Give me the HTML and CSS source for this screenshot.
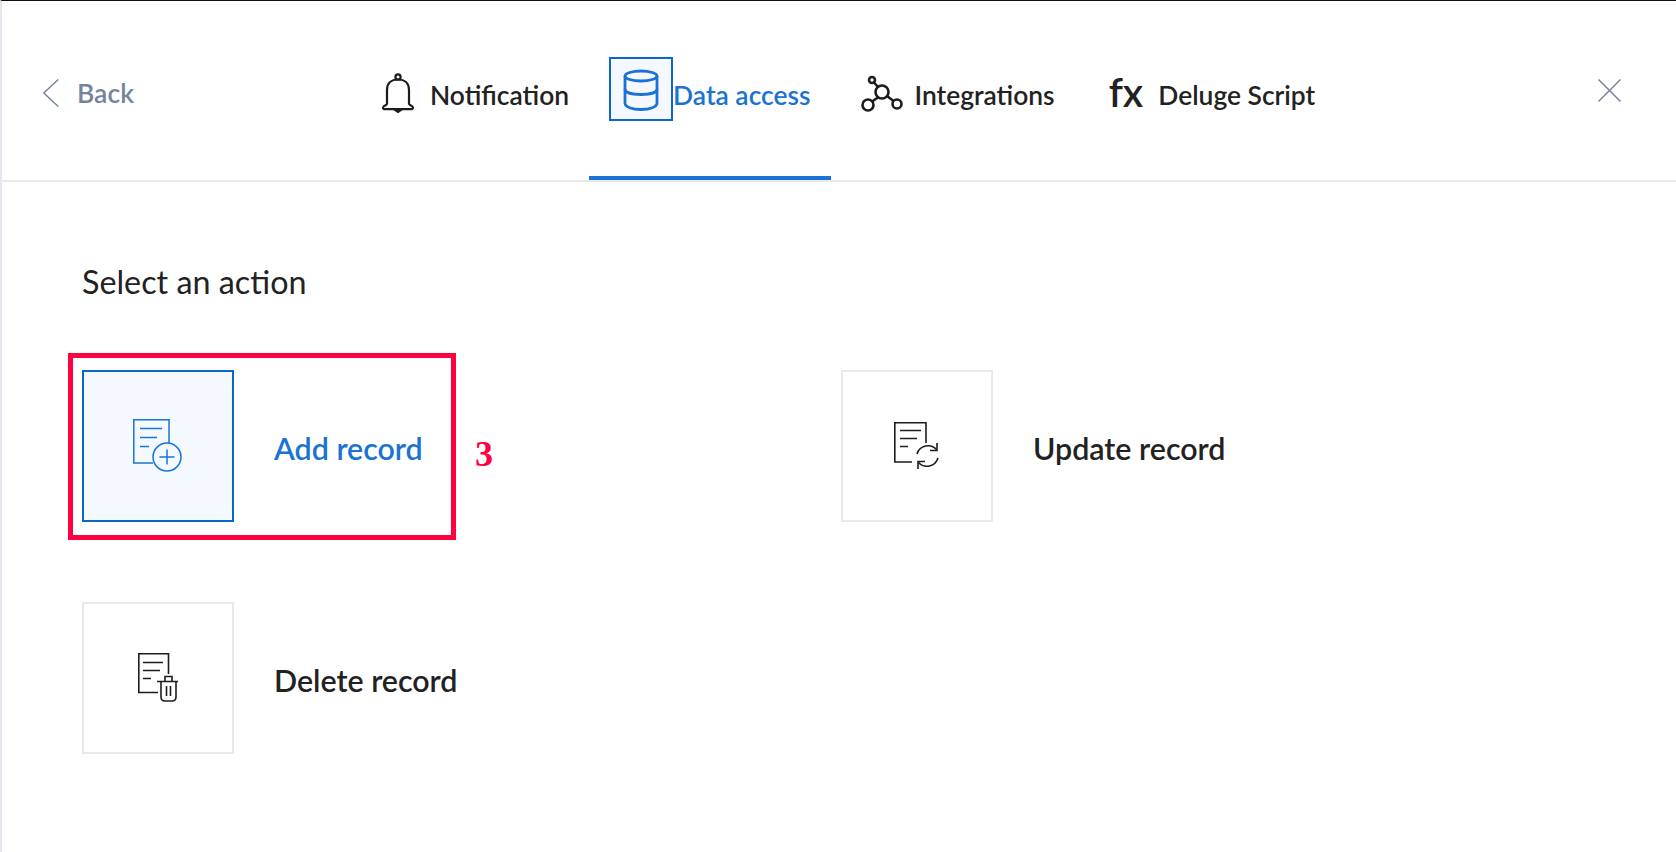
FILE: index.html
```html
<!DOCTYPE html>
<html lang="en">
<head>
<meta charset="utf-8">
<title>Select an action</title>
<link rel="stylesheet" href="styles.css">
</head>
<body>
<div class="page">
  <header class="header">
    <a class="back">
      <svg class="back-icon" width="20" height="32" viewBox="0 0 20 32"><path d="M18 1 L2 16 L18 31" fill="none" stroke="#76839c" stroke-width="1.6"/></svg>
      <span>Back</span>
    </a>
    <nav class="tabs">
      <div class="tab tab-notification">
        <svg class="bell" width="34" height="40" viewBox="0 0 34 40" fill="none" stroke="#1c1c1c" stroke-width="2.2">
          <circle cx="17" cy="4" r="2.6"/>
          <path d="M6 31 V17 C6 10 10.500 6.500 17 6.500 C23.500 6.500 28 10 28 17 V31 C28 32 31.800 32.500 32 34.500 C32.100 35.800 31 36.200 30 36.200 H4 C3 36.200 1.900 35.800 2 34.500 C2.200 32.500 6 32 6 31 Z"/>
          <path d="M15 37.500 H19 L17 39 Z" fill="#1c1c1c"/>
        </svg>
        <span>Notification</span>
      </div>
      <div class="tab tab-active">
        <div class="db-box">
          <svg width="38" height="44" viewBox="0 0 38 44" fill="none" stroke="#1a73d4" stroke-width="2.8">
            <ellipse cx="19" cy="9" rx="16" ry="5"/>
            <path d="M3 9 V36 C3 40 10 42.500 19 42.500 C28 42.500 35 40 35 36 V9"/>
            <path d="M3 22 C3 25.500 10 27.500 19 27.500 C28 27.500 35 25.500 35 22"/>
          </svg>
        </div>
        <span>Data access</span>
      </div>
      <div class="tab tab-integrations">
        <svg width="64" height="40" viewBox="0 0 64 40" fill="none" stroke="#1c1c1c" stroke-width="2.600">
          <circle cx="31" cy="19" r="6.500"/>
          <circle cx="21" cy="7" r="3"/>
          <circle cx="17" cy="32" r="5.500"/>
          <circle cx="46" cy="31" r="4.500"/>
          <path d="M23 9.500 L27 14 M27 24.500 L21 28.500 M36 23 L42.500 28"/>
        </svg>
        <span>Integrations</span>
      </div>
      <div class="tab tab-script">
        <span class="fx">fx</span>
        <span>Deluge Script</span>
      </div>
    </nav>
    <svg class="close" width="25" height="25" viewBox="0 0 25 25"><path d="M1.500 1.500 L23.500 23.500 M23.500 1.500 L1.500 23.500" stroke="#76839c" stroke-width="1.500" fill="none"/></svg>
  </header>

  <main class="content">
    <h2 class="title">Select an action</h2>
    <div class="actions">
      <div class="action action-selected">
        <div class="tile">
          <svg width="60" height="60" viewBox="0 0 60 60" fill="none" stroke="#1a73d4" stroke-width="1.500">
            <path d="M41 27 V3.800 H5.800 V47 H25"/>
            <path d="M12 12.500 H34 M12 21.500 H29 M12 30.500 H21"/>
            <circle cx="39" cy="41" r="14"/>
            <path d="M39 33.500 V48.500 M31.500 41 H46.500"/>
          </svg>
        </div>
        <span class="label">Add record</span>
        <div class="callout"></div>
        <span class="callout-number">3</span>
      </div>
      <div class="action">
        <div class="tile">
          <svg width="60" height="60" viewBox="0 0 60 60" fill="none" stroke="#1c1c1c" stroke-width="1.600">
            <path d="M39 27 V6.800 H7.800 V46 H25"/>
            <path d="M13 14.500 H34 M13 22.500 H30 M13 30.500 H21"/>
            <path d="M30 38 A11.500 11.500 0 0 1 49.500 33.500"/>
            <path d="M50 27 V34.500 H43" />
            <path d="M51 42 A11.500 11.500 0 0 1 31.500 46.500"/>
            <path d="M31 53 V45.500 H38"/>
          </svg>
        </div>
        <span class="label">Update record</span>
      </div>
      <div class="action">
        <div class="tile">
          <svg width="60" height="60" viewBox="0 0 60 60" fill="none" stroke="#1c1c1c" stroke-width="1.600">
            <path d="M40.500 26 V5.800 H10.800 V44.500 H30"/>
            <path d="M15 14.500 H35 M15 22.500 H32 M15 30.500 H23"/>
            <path d="M29 33.500 H50 M37 33 V28.500 H44 V33"/>
            <path d="M33 33.500 V49 C33 52 34.500 53 37 53 H44 C46.500 53 48 52 48 49 V33.500"/>
            <path d="M38.500 38 V48 M42.500 38 V48"/>
          </svg>
        </div>
        <span class="label">Delete record</span>
      </div>
    </div>
  </main>
</div>
</body>
</html>
```

FILE: styles.css
```css
* { box-sizing: border-box; }
html, body { margin: 0; padding: 0; background: #fff; }
body {
  font-family: Lato, "Open Sans", sans-serif;
  color: #222;
  overflow: hidden;
}
.page {
  height: 852px;
  border-top: 1px solid #111;
  border-left: 2px solid #e2e8ee;
}
.header {
  height: 181px;
  display: flex;
  align-items: flex-start;
  padding-left: 40px;
  padding-right: 54px;
  border-bottom: 2px solid #e9e9e9;
}
.back {
  display: flex;
  align-items: center;
  gap: 17px;
  width: 92px;
  height: 32px;
  margin-top: 76px;
  font-size: 26.500px;
  font-weight: 600;
  color: #76839c;
}
.tabs {
  display: flex;
  margin-left: 227px;
  height: 179px;
}
.tab {
  display: flex;
  align-items: center;
  height: 179px;
  padding: 0 20px;
  font-size: 26.400px;
  font-weight: 600;
  color: #222;
  border-bottom: 4px solid transparent;
  padding-top: 12px;
}
.bell { margin-top: -3px; }
.tab-notification { gap: 15px; }
.tab-active {
  color: #1a73d4;
  border-bottom-color: #1a73d4;
  padding-top: 0;
}
.db-box {
  width: 64px;
  height: 64px;
  border: 2px solid #0b66c9;
  background: #f5f9ff;
  display: flex;
  align-items: center;
  justify-content: center;
}
.tab-active span { margin-top: 12px; }
.tab-integrations { padding-right: 34px; }
.tab-integrations svg { margin-top: -4px; }
.tab-script { gap: 15px; }
.fx {
  font-size: 40px;
  font-weight: 600;
  line-height: 1;
  margin-top: -6px;
}
.close { margin-top: 77px; margin-left: auto; }
.content { padding: 0 0 0 80px; }
.title {
  margin: 0;
  padding-top: 80px;
  height: 188px;
  font-size: 32.300px;
  line-height: 40px;
  font-weight: 400;
  color: #222;
}
.actions {
  display: grid;
  grid-template-columns: 759px 1fr;
  grid-auto-rows: 152px;
  row-gap: 80px;
}
.action {
  position: relative;
  display: flex;
  align-items: center;
  gap: 40px;
}
.tile {
  width: 152px;
  height: 152px;
  flex: none;
  border: 2px solid #e9e9e9;
  display: flex;
  align-items: center;
  justify-content: center;
}
.label {
  font-size: 30.400px;
  font-weight: 600;
  color: #222;
  margin-top: 4px;
}
.action-selected .tile { border-color: #0b66c9; background: #f4f8ff; }
.action-selected .label { color: #1a73d4; }
.callout {
  position: absolute;
  left: -14px;
  top: -17px;
  width: 388px;
  height: 187px;
  border: 5px solid #ff0040;
}
.callout-number {
  position: absolute;
  left: 393px;
  top: 64px;
  font-family: "Liberation Serif", serif;
  font-weight: 700;
  font-size: 36px;
  line-height: 40px;
  color: #ff0040;
}
```
